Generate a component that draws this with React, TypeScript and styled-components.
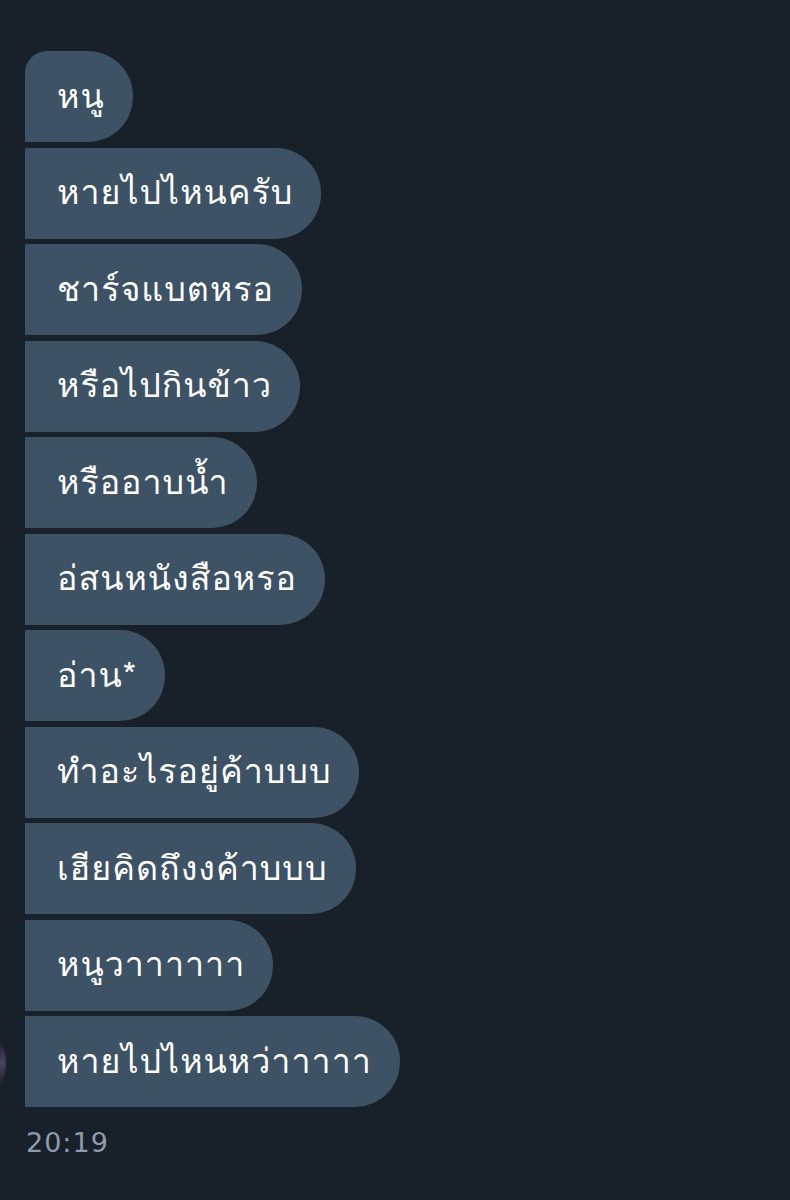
import React from "react";
import styled, { createGlobalStyle } from "styled-components";

const Global = createGlobalStyle`
  html, body { margin: 0; padding: 0; background: #18202a; }
  body { font-family: "Noto Sans Thai Looped", "Noto Sans Thai UI", "Noto Sans Thai", "Noto Sans", "Liberation Sans", sans-serif; }
`;

const Screen = styled.div`
  position: relative;
  width: 790px;
  height: 1200px;
  background: #18202a;
  overflow: hidden;
  box-sizing: border-box;
  padding: 51px 0 0 25px;
`;

const Thread = styled.div`
  display: flex;
  flex-direction: column;
  align-items: flex-start;
  gap: 5.5px;
`;

const Bubble = styled.div<{ $first?: boolean }>`
  box-sizing: border-box;
  height: 91px;
  display: flex;
  align-items: center;
  padding: 0 28px 2px 32px;
  background: #3d5265;
  color: #ffffff;
  font-family: "Loma", "Garuda", "Tlwg Typo", "Kinnari", "Noto Sans Thai Looped", "Noto Sans Thai", "Noto Sans", sans-serif;
  font-size: 34px;
  letter-spacing: 1px;
  line-height: 1;
  white-space: nowrap;
  border-radius: ${(p) => (p.$first ? "22px" : "0")} 45px 45px 0;
`;

const Time = styled.div`
  margin-top: 20px;
  margin-left: 1px;
  color: #8e9bab;
  font-family: "DejaVu Sans", sans-serif;
  font-size: 27px;
  letter-spacing: 1px;
`;

const Avatar = styled.div`
  position: absolute;
  left: -18px;
  top: 1038px;
  width: 24px;
  height: 50px;
  border-radius: 50%;
  background: radial-gradient(circle at 80% 50%, #4a4560 0%, #2a2838 50%, #18202a 90%);
`;

const messages = [
  "หนู",
  "หายไปไหนครับ",
  "ชาร์จแบตหรอ",
  "หรือไปกินข้าว",
  "หรืออาบน้ำ",
  "อ่สนหนังสือหรอ",
  "อ่าน*",
  "ทำอะไรอยู่ค้าบบบ",
  "เฮียคิดถึงงค้าบบบ",
  "หนูวาาาาาา",
  "หายไปไหนหว่าาาาา",
];

export default function App() {
  return (
    <>
      <Global />
      <Screen>
        <Avatar />
        <Thread>
          {messages.map((m, i) => (
            <Bubble key={i} $first={i === 0}>
              {m}
            </Bubble>
          ))}
        </Thread>
        <Time>20:19</Time>
      </Screen>
    </>
  );
}
